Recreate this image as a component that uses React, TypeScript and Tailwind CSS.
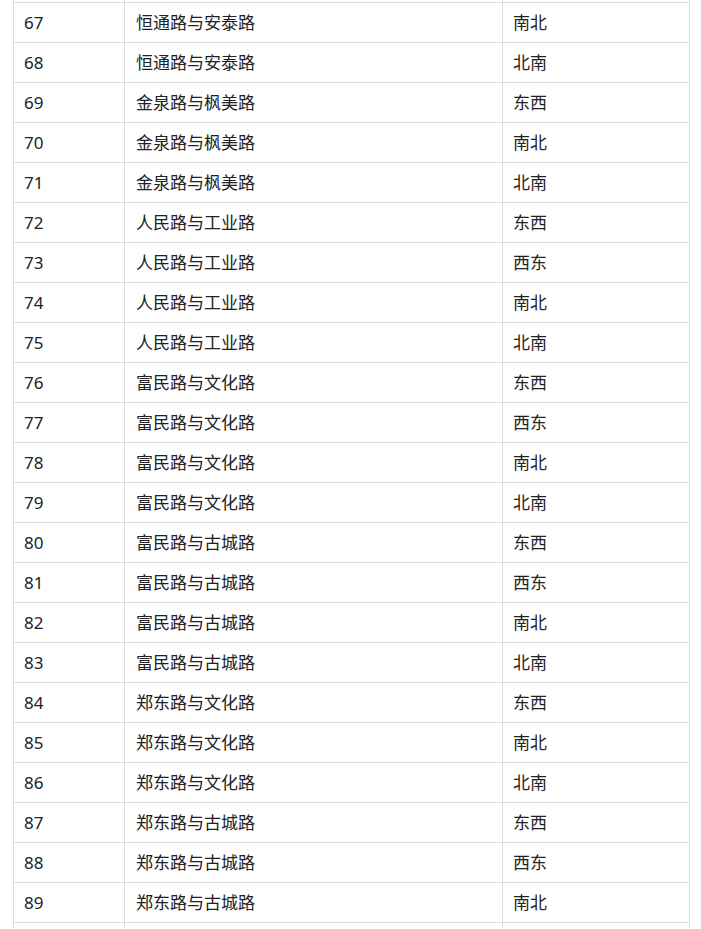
const rows: [string, string, string][] = [
  ["", "", ""],
  ["67", "恒通路与安泰路", "南北"],
  ["68", "恒通路与安泰路", "北南"],
  ["69", "金泉路与枫美路", "东西"],
  ["70", "金泉路与枫美路", "南北"],
  ["71", "金泉路与枫美路", "北南"],
  ["72", "人民路与工业路", "东西"],
  ["73", "人民路与工业路", "西东"],
  ["74", "人民路与工业路", "南北"],
  ["75", "人民路与工业路", "北南"],
  ["76", "富民路与文化路", "东西"],
  ["77", "富民路与文化路", "西东"],
  ["78", "富民路与文化路", "南北"],
  ["79", "富民路与文化路", "北南"],
  ["80", "富民路与古城路", "东西"],
  ["81", "富民路与古城路", "西东"],
  ["82", "富民路与古城路", "南北"],
  ["83", "富民路与古城路", "北南"],
  ["84", "郑东路与文化路", "东西"],
  ["85", "郑东路与文化路", "南北"],
  ["86", "郑东路与文化路", "北南"],
  ["87", "郑东路与古城路", "东西"],
  ["88", "郑东路与古城路", "西东"],
  ["89", "郑东路与古城路", "南北"],
  ["", "", ""],
];

export default function App() {
  return (
    <div className="h-[929px] overflow-hidden bg-white">
      <table className="ml-[13px] -mt-[38px] w-[677px] border-collapse text-[17px] text-[#222] font-['Noto_Sans','Noto_Sans_CJK_SC',sans-serif]">
        <tbody>
          {rows.map(([no, road, dir], i) => (
            <tr key={i}>
              <td className="h-[40px] w-[111px] border border-[#dcdcdc] pl-[10px] align-middle leading-none">
                {no}
              </td>
              <td className="h-[40px] w-[378px] border border-[#dcdcdc] pl-[11px] align-middle leading-none">
                {road}
              </td>
              <td className="h-[40px] border border-[#dcdcdc] pl-[10px] align-middle leading-none">
                {dir}
              </td>
            </tr>
          ))}
        </tbody>
      </table>
    </div>
  );
}
